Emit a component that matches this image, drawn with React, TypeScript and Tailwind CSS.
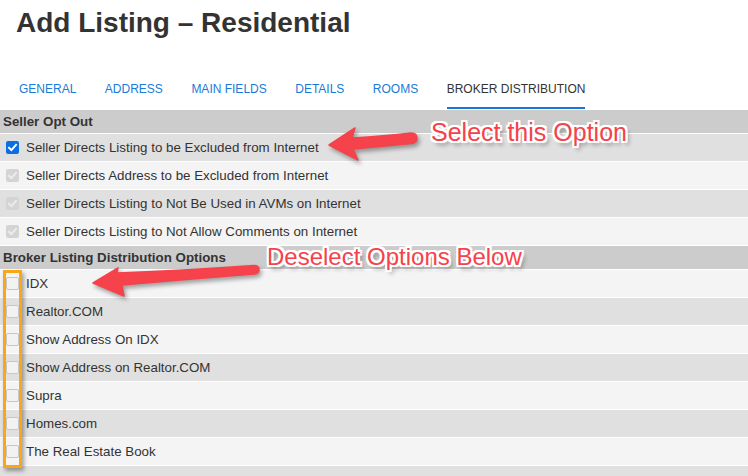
import React from "react";

const tabs = ["GENERAL", "ADDRESS", "MAIN FIELDS", "DETAILS", "ROOMS", "BROKER DISTRIBUTION"];

type Box = "checked" | "disabled" | "empty";

function CheckBox({ kind }: { kind: Box }) {
  if (kind === "checked") {
    return (
      <div className="ml-[6px] w-[13px] h-[13px] rounded-[2px] bg-[#0b6fe3] flex items-center justify-center shrink-0">
        <svg width="13" height="13" viewBox="0 0 13 13">
          <path d="M3 6.8 L5.4 9.1 L10 3.9" fill="none" stroke="#fff" strokeWidth="2" strokeLinecap="square" />
        </svg>
      </div>
    );
  }
  if (kind === "disabled") {
    return (
      <div className="ml-[6px] w-[13px] h-[13px] rounded-[2px] bg-[#d4d4d4] flex items-center justify-center shrink-0">
        <svg width="13" height="13" viewBox="0 0 13 13">
          <path d="M3 6.8 L5.4 9.1 L10 3.9" fill="none" stroke="#ececec" strokeWidth="2" strokeLinecap="square" />
        </svg>
      </div>
    );
  }
  return <div className="ml-[6px] w-[13px] h-[13px] rounded-[2px] bg-[#f2f2f2] border border-[#c6c6c6] shrink-0" />;
}

function Row({ label, kind, dark }: { label: string; kind: Box; dark: boolean }) {
  return (
    <div className={`h-[28px] border-b border-white flex items-center ${dark ? "bg-[#e0e0e0]" : "bg-[#f4f4f4]"}`}>
      <CheckBox kind={kind} />
      <span className="ml-[7px] text-[13.33px] text-[#333] leading-[16px]">{label}</span>
    </div>
  );
}

function Header({ title }: { title: string }) {
  return (
    <div className="h-[24px] border-b border-white bg-[#cccccc] flex items-center pl-[3px]">
      <span className="text-[13.33px] font-bold text-[#333] leading-[16px]">{title}</span>
    </div>
  );
}

const optOut = [
  "Seller Directs Listing to be Excluded from Internet",
  "Seller Directs Address to be Excluded from Internet",
  "Seller Directs Listing to Not Be Used in AVMs on Internet",
  "Seller Directs Listing to Not Allow Comments on Internet",
];

const broker = [
  "IDX",
  "Realtor.COM",
  "Show Address On IDX",
  "Show Address on Realtor.COM",
  "Supra",
  "Homes.com",
  "The Real Estate Book",
];

const calloutShadow =
  "[text-shadow:2px_0_0_#fff,-2px_0_0_#fff,0_2px_0_#fff,0_-2px_0_#fff,2px_2px_0_#fff,-2px_-2px_0_#fff,2px_-2px_0_#fff,-2px_2px_0_#fff,3px_4px_4px_rgba(0,0,0,0.45)]";

export default function App() {
  return (
    <div className="relative w-[748px] h-[476px] overflow-hidden bg-white font-['Liberation_Sans',Arial,sans-serif]">
      <h1 className="pt-[7px] pl-[16px] text-[28px] leading-[32px] font-bold text-[#333]">
        Add Listing – Residential
      </h1>

      <nav className="mt-[43px] flex gap-[28.5px] pl-[19px] text-[12px] leading-[14px]">
        {tabs.map((t, i) => {
          const active = i === tabs.length - 1;
          return (
            <div
              key={t}
              className={`pb-[11px] mb-px border-b-2 ${
                active ? "border-[#1976d2] text-[#333]" : "border-transparent text-[#1a7bd6]"
              }`}
            >
              {t}
            </div>
          );
        })}
      </nav>

      <div>
        <Header title="Seller Opt Out" />
        {optOut.map((l, i) => (
          <Row key={l} label={l} kind={i === 0 ? "checked" : "disabled"} dark={i % 2 === 0} />
        ))}
        <Header title="Broker Listing Distribution Options" />
        {broker.map((l, i) => (
          <Row key={l} label={l} kind="empty" dark={i % 2 === 1} />
        ))}
        <div className="h-[20px] bg-[#e0e0e0]" />
      </div>

      {/* orange highlight frame */}
      <div className="absolute left-[3px] top-[270px] w-[19px] h-[198px] border-[3px] border-[#f9a61a] shadow-[2px_3px_4px_rgba(0,0,0,0.35)]" />

      {/* arrows */}
      <svg
        className="absolute left-0 top-0 pointer-events-none [filter:drop-shadow(2px_3px_2px_rgba(0,0,0,0.35))]"
        width="748"
        height="476"
        viewBox="0 0 748 476"
      >
        <path
          d="M329,145 L355,128 L352,138 Q385,136 411,133 Q417,133 417,138.5 Q417,143 411,143.5 Q385,146 353,149 L358,160 Z"
          fill="#f5424b"
          strokeLinejoin="round"
          stroke="#f5424b"
          strokeWidth="1.5"
        />
        <path
          d="M93,283 L118,268 L117,273 Q190,270 254,265.5 Q259,265.5 259,269.5 Q259,273.5 254,274 Q190,279 122,285 L124,296 Z"
          fill="#f5424b"
          strokeLinejoin="round"
          stroke="#f5424b"
          strokeWidth="1.5"
        />
      </svg>

      <span
        className={`absolute left-[431px] top-[118px] text-[25px] leading-[28px] text-[#f5424b] whitespace-nowrap ${calloutShadow}`}
      >
        Select this Option
      </span>
      <span
        className={`absolute left-[267px] top-[243px] text-[24px] leading-[28px] text-[#f5424b] whitespace-nowrap ${calloutShadow}`}
      >
        Deselect Options Below
      </span>
    </div>
  );
}
